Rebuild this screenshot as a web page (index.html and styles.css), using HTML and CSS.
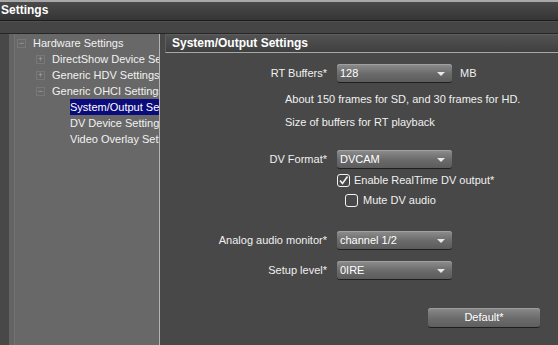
FILE: index.html
```html
<!DOCTYPE html>
<html>
<head>
<meta charset="utf-8">
<title>Settings</title>
<link rel="stylesheet" href="styles.css">
</head>
<body>
<div class="titlebar">Settings</div>
<div class="strip"></div>
<div class="main">
	<div class="tree">
		<div class="node lvl1"><span class="box">&minus;</span>Hardware Settings</div>
		<div class="node lvl2"><span class="box">+</span>DirectShow Device Settings</div>
		<div class="node lvl2"><span class="box">+</span>Generic HDV Settings</div>
		<div class="node lvl2"><span class="box">&minus;</span>Generic OHCI Settings</div>
		<div class="node lvl3 selected">System/Output Settings</div>
		<div class="node lvl3">DV Device Settings</div>
		<div class="node lvl3">Video Overlay Settings</div>
	</div>
	<div class="panel">
		<div class="panelhead">System/Output Settings</div>
		<div class="form">
			<div class="row r-buffers">
				<label class="lbl">RT Buffers*</label>
				<div class="combo">128</div>
				<span class="unit">MB</span>
			</div>
			<div class="note n1">About 150 frames for SD, and 30 frames for HD.</div>
			<div class="note n2">Size of buffers for RT playback</div>
			<div class="row r-format">
				<label class="lbl">DV Format*</label>
				<div class="combo">DVCAM</div>
			</div>
			<div class="check c1">
				<svg width="13" height="13" viewBox="0 0 13 13"><rect x="0.5" y="0.5" width="12" height="12" rx="2.5" fill="none" stroke="#f2f2f2"/><path d="M3 6.5 L5.5 9.5 L10.5 2.5" fill="none" stroke="#f2f2f2" stroke-width="1.6"/></svg>
				<span>Enable RealTime DV output*</span>
			</div>
			<div class="check c2">
				<svg width="13" height="13" viewBox="0 0 13 13"><rect x="0.5" y="0.5" width="12" height="12" rx="2.5" fill="none" stroke="#f2f2f2"/></svg>
				<span>Mute DV audio</span>
			</div>
			<div class="row r-audio">
				<label class="lbl">Analog audio monitor*</label>
				<div class="combo">channel 1/2</div>
			</div>
			<div class="row r-setup">
				<label class="lbl">Setup level*</label>
				<div class="combo">0IRE</div>
			</div>
			<div class="buttons">
				<div class="btn">Default*</div>
			</div>
		</div>
	</div>
</div>
</body>
</html>
```
FILE: styles.css
```css
html, body { margin: 0; padding: 0; }
body { width: 558px; height: 345px; overflow: hidden; background: #484848; color: #f0f0f0; font: 11px "Liberation Sans", Arial, sans-serif; }

.titlebar { height: 18px; border-top: 2px solid #a8a8a8; border-bottom: 1px solid #1c1c1c; background: linear-gradient(#4a4a4a, #353535); color: #fff; font-weight: bold; font-size: 12px; line-height: 17px; padding-left: 1px; }
.strip { height: 11px; background: #454545; border-top: 1px solid #505050; border-bottom: 1px solid #262626; }

.main { display: flex; height: 311px; }

.tree { width: 145px; margin-left: 9px; padding-top: 1px; background: #686868; border-left: 5px solid #646464; border-right: 1px solid #b4b4b4; box-shadow: inset 1px 0 0 #727272; overflow: hidden; white-space: nowrap; color: #f2f2f2; }
.node { height: 16px; line-height: 16px; position: relative; }
.lvl1 { padding-left: 19px; }
.lvl2 { padding-left: 38px; }
.lvl3 { padding-left: 56px; }
.box { position: absolute; top: 4px; width: 7px; height: 7px; line-height: 6px; text-align: center; font-size: 9px; color: #a4a4a4; border: 1px solid #787878; }
.lvl1 .box { left: 3px; }
.lvl2 .box { left: 22px; }
.selected { background: #0b0b7c; color: #fff; margin-left: 56px; padding-left: 0; }

.panel { flex: 1; margin-left: 5px; }
.panelhead { height: 17px; line-height: 17px; padding-left: 6px; font-weight: bold; font-size: 12px; color: #fff; background: linear-gradient(#525252, #404040); border-top: 1px solid #5e5e5e; border-left: 1px solid #5e5e5e; border-bottom: 1px solid #a8a8a8; }

.form { position: relative; }
.row { display: grid; grid-template-columns: 162px 115px auto; column-gap: 10px; align-items: center; height: 19px; }
.lbl { text-align: right; }
.unit { margin-left: -2px; }
.r-buffers { margin-top: 10px; }
.r-format { margin-top: 15px; }
.r-audio { margin-top: 20px; }
.r-setup { margin-top: 11px; }

.combo { position: relative; height: 18px; line-height: 18px; padding-left: 3px; border-radius: 3px; background: linear-gradient(#8e8e8e, #6a6a6a 55%, #5c5c5c); box-shadow: 0 1px 0 #1e1e1e, inset 0 1px 0 #a0a0a0; color: #fff; }
.combo::after { content: ""; position: absolute; right: 7px; top: 8px; border-left: 4px solid transparent; border-right: 4px solid transparent; border-top: 4px solid #e8e8e8; }

.note { padding-left: 120px; height: 23px; line-height: 23px; }
.n1 { margin-top: 6px; }

.check { display: flex; align-items: center; gap: 4px; height: 20px; }
.c1 { margin-top: 2px; padding-left: 172px; }
.c2 { padding-left: 180px; gap: 5px; }

.buttons { display: flex; justify-content: flex-end; padding-right: 18px; margin-top: 29px; }
.btn { width: 112px; height: 19px; line-height: 19px; text-align: center; border-radius: 3px; background: linear-gradient(#8a8a8a, #6c6c6c 55%, #5e5e5e); box-shadow: 0 1px 0 #1e1e1e, inset 0 1px 0 #9c9c9c; color: #fff; }
```
